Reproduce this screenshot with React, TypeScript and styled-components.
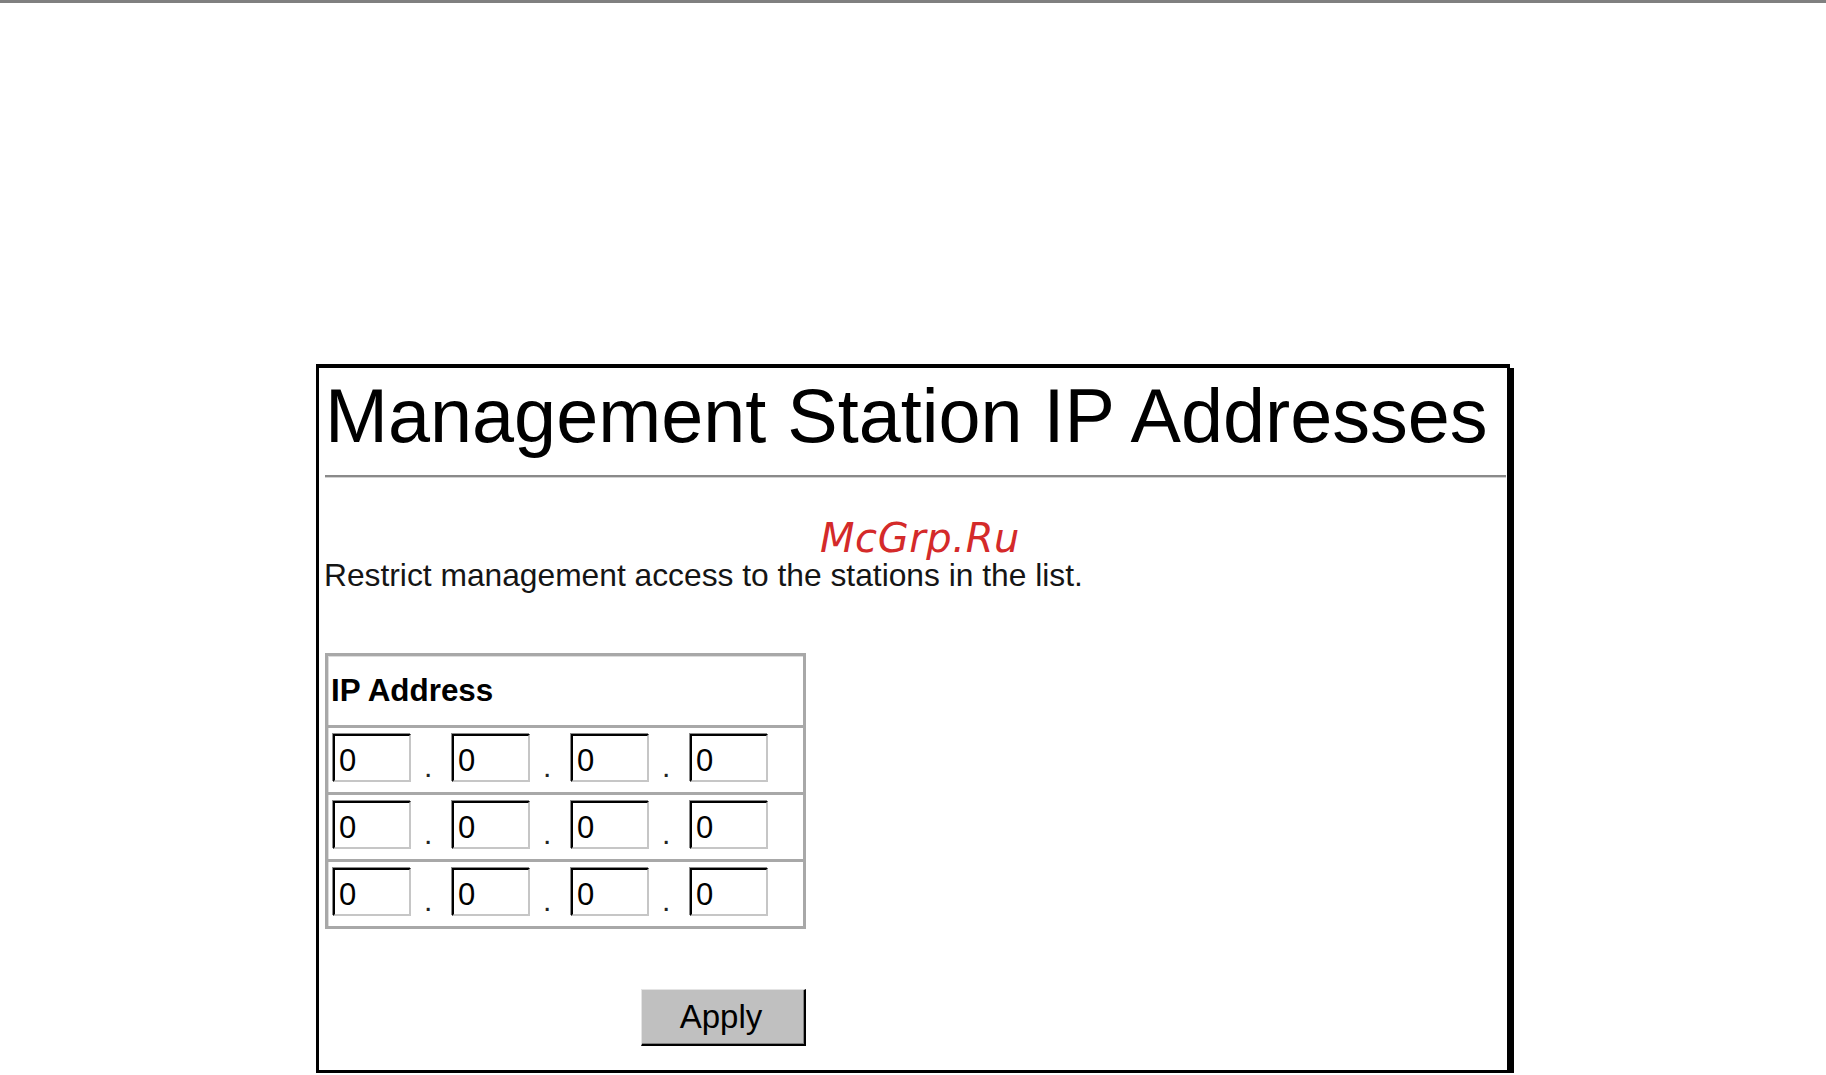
import React from "react";
import styled, { createGlobalStyle } from "styled-components";

const GlobalStyle = createGlobalStyle`
  html, body {
    margin: 0;
    padding: 0;
    background: #ffffff;
  }
  body {
    font-family: "Liberation Sans", Arial, sans-serif;
    color: #000;
  }
  * { box-sizing: border-box; }
`;

const TopBar = styled.div`
  height: 3px;
  background: #808080;
`;

const Frame = styled.section`
  position: relative;
  width: 1194px;
  margin: 361px auto 0;
  border: 3px solid #000;
  border-top-width: 4px;
  box-shadow: 4px 4px 0 #000;
  padding: 0 1px 24px 6px;
  background: #fff;
`;

const Watermark = styled.div`
  position: absolute;
  left: 501px;
  top: 150px;
  font-family: "DejaVu Sans", Verdana, sans-serif;
  font-style: italic;
  font-size: 40px;
  line-height: 40px;
  letter-spacing: 0.6px;
  color: #d42a2a;
  pointer-events: none;
`;

const Title = styled.h1`
  margin: 10.5px 0 0;
  padding: 0;
  font-family: "Liberation Sans", Arial, sans-serif;
  font-weight: normal;
  font-size: 75.6px;
  line-height: 75px;
  color: #000;
  white-space: nowrap;
`;

const Rule = styled.div`
  margin-top: 21.5px;
  height: 3px;
  border-top: 2px solid #8a8a8a;
  border-bottom: 1px solid #d2d2d2;
`;

const Intro = styled.p`
  margin: 82px 0 0 -1px;
  font-size: 31.75px;
  line-height: 31.5px;
  color: #151515;
  white-space: nowrap;
`;

const Form = styled.div`
  width: 481px;
  margin-top: 61px;
  display: flex;
  flex-direction: column;
`;

const AddressTable = styled.div`
  border: 3px solid #a8a8a8;
  box-shadow: inset 1px 1px 0 #dcdcdc;
`;

const HeaderCell = styled.div`
  height: 69px;
  padding: 19px 0 0 3px;
  font-weight: bold;
  font-size: 31.4px;
  line-height: 31px;
  color: #000;
`;

const AddressRow = styled.div`
  height: 67px;
  border-top: 3px solid #a8a8a8;
  display: flex;
  align-items: flex-end;
  padding: 6px 0 10px 5px;
`;

const Octet = styled.input`
  width: 78px;
  height: 48px;
  flex: none;
  margin: 0;
  padding: 6px 0 0 4px;
  border-style: solid;
  border-width: 2px;
  border-color: #000 #c6c6c6 #c6c6c6 #000;
  box-shadow: -1px -1px 0 #8a8a8a;
  background: #fff;
  font-family: "Liberation Sans Narrow", "Liberation Sans", Arial, sans-serif;
  font-size: 31px;
  color: #000;
  outline: none;
`;

const Dot = styled.span`
  width: 41px;
  flex: none;
  text-align: left;
  padding-left: 13px;
  font-size: 30px;
  line-height: 30px;
  color: #222;
`;

const ApplyButton = styled.button`
  align-self: flex-end;
  margin-top: 60px;
  width: 165px;
  height: 57px;
  background: #c0c0c0;
  border-style: solid;
  border-width: 1px 2px 2px 1px;
  border-color: #e4e4e4 #000 #000 #e4e4e4;
  box-shadow: inset -1px -1px 0 #808080;
  font-family: "Liberation Sans", Arial, sans-serif;
  font-size: 33px;
  color: #000;
  padding: 0 4px 0 0;
  cursor: pointer;
`;

const rows = [
  ["0", "0", "0", "0"],
  ["0", "0", "0", "0"],
  ["0", "0", "0", "0"],
];

export default function App() {
  return (
    <>
      <GlobalStyle />
      <TopBar />
      <Frame>
        <Watermark>McGrp.Ru</Watermark>
        <Title>Management Station IP Addresses</Title>
        <Rule />
        <Intro>Restrict management access to the stations in the list.</Intro>
        <Form>
          <AddressTable>
            <HeaderCell>IP Address</HeaderCell>
            {rows.map((row, r) => (
              <AddressRow key={r}>
                {row.map((v, i) => (
                  <React.Fragment key={i}>
                    <Octet type="text" defaultValue={v} />
                    {i < row.length - 1 && <Dot>.</Dot>}
                  </React.Fragment>
                ))}
              </AddressRow>
            ))}
          </AddressTable>
          <ApplyButton type="button">Apply</ApplyButton>
        </Form>
      </Frame>
    </>
  );
}
